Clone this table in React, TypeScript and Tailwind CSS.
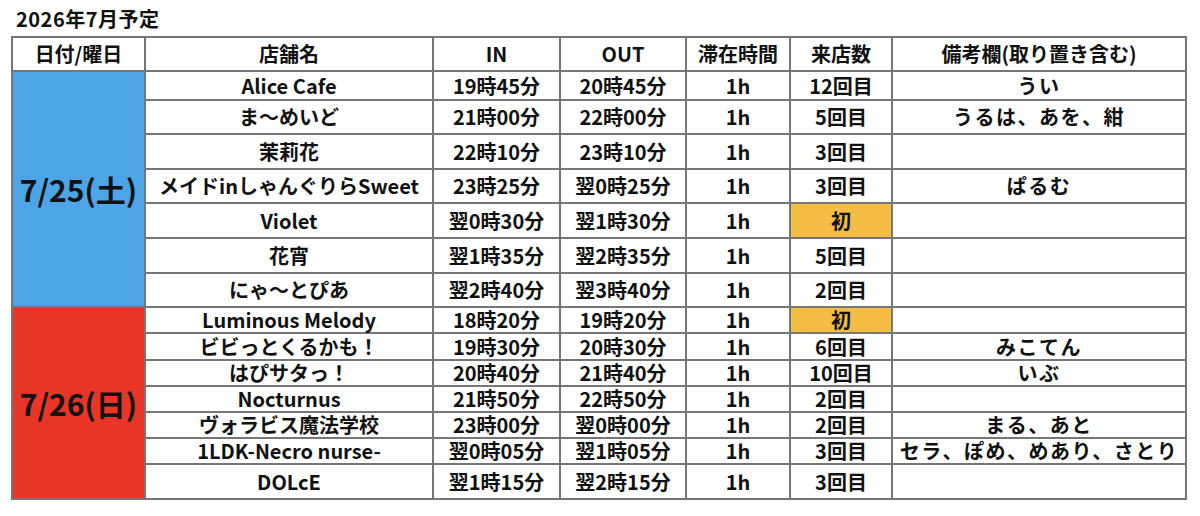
type Row = { h: string; cells: string[] };

const BLUE: Row[] = [
  { h: "h-[27px]", cells: ["Alice Cafe", "19時45分", "20時45分", "1h", "12回目", "うい"] },
  { h: "h-[32px]", cells: ["ま〜めいど", "21時00分", "22時00分", "1h", "5回目", "うるは、あを、紺"] },
  { h: "h-[33px]", cells: ["茉莉花", "22時10分", "23時10分", "1h", "3回目", ""] },
  { h: "h-[32px]", cells: ["メイドinしゃんぐりらSweet", "23時25分", "翌0時25分", "1h", "3回目", "ぱるむ"] },
  { h: "h-[33px]", cells: ["Violet", "翌0時30分", "翌1時30分", "1h", "初", ""] },
  { h: "h-[33px]", cells: ["花宵", "翌1時35分", "翌2時35分", "1h", "5回目", ""] },
  { h: "h-[32px]", cells: ["にゃ〜とぴあ", "翌2時40分", "翌3時40分", "1h", "2回目", ""] },
];

const RED: Row[] = [
  { h: "h-[24px]", cells: ["Luminous Melody", "18時20分", "19時20分", "1h", "初", ""] },
  { h: "h-[25px]", cells: ["ビビっとくるかも！", "19時30分", "20時30分", "1h", "6回目", "みこてん"] },
  { h: "h-[24px]", cells: ["はぴサタっ！", "20時40分", "21時40分", "1h", "10回目", "いぶ"] },
  { h: "h-[24px]", cells: ["Nocturnus", "21時50分", "22時50分", "1h", "2回目", ""] },
  { h: "h-[24px]", cells: ["ヴォラビス魔法学校", "23時00分", "翌0時00分", "1h", "2回目", "まる、あと"] },
  { h: "h-[24px]", cells: ["1LDK-Necro nurse-", "翌0時05分", "翌1時05分", "1h", "3回目", "セラ、ぽめ、めあり、さとり"] },
  { h: "h-[33px]", cells: ["DOLcE", "翌1時15分", "翌2時15分", "1h", "3回目", ""] },
];

const HEAD = ["店舗名", "IN", "OUT", "滞在時間", "来店数", "備考欄(取り置き含む)"];
const cols = "grid grid-cols-[286px_125px_124px_102px_100px_292px] gap-[2px]";
const cell = "bg-white flex items-center justify-center whitespace-nowrap";

function Line({ row }: { row: Row }) {
  return (
    <div className={`${cols} ${row.h}`}>
      {row.cells.map((t, j) => (
        <div key={j} className={`${cell} ${t === "初" ? "!bg-[#f4bd45]" : ""} ${j === 5 ? "tracking-[1.5px]" : ""}`}>
          {t}
        </div>
      ))}
    </div>
  );
}

export default function App() {
  return (
    <div className="w-[1200px] h-[516px] bg-white text-[#111] font-bold font-['Noto_Sans_CJK_JP','Noto_Sans',sans-serif]">
      <div className="h-[36px] pl-[16px] pt-[5px] text-[20px] leading-[28px] tracking-[0.5px]">2026年7月予定</div>

      <div className="ml-[11px] w-[1176px] flex gap-[2px] p-[2px] bg-[#767676] text-[20px] leading-none">
        {/* 日付列 */}
        <div className="w-[131px] flex flex-col gap-[2px]">
          <div className={`${cell} h-[32px]`}>日付/曜日</div>
          <div className="h-[234px] bg-[#4da4e6] flex items-center justify-center text-[30px]">7/25(土)</div>
          <div className="h-[190px] bg-[#e73628] flex items-center justify-center text-[30px]">7/26(日)</div>
        </div>

        <div className="flex flex-col gap-[2px]">
          <div className={`${cols} h-[32px]`}>
            {HEAD.map(h => (
              <div key={h} className={cell}>{h}</div>
            ))}
          </div>
          {BLUE.map((r, i) => <Line key={`b${i}`} row={r} />)}
          {RED.map((r, i) => <Line key={`r${i}`} row={r} />)}
        </div>
      </div>
    </div>
  );
}
